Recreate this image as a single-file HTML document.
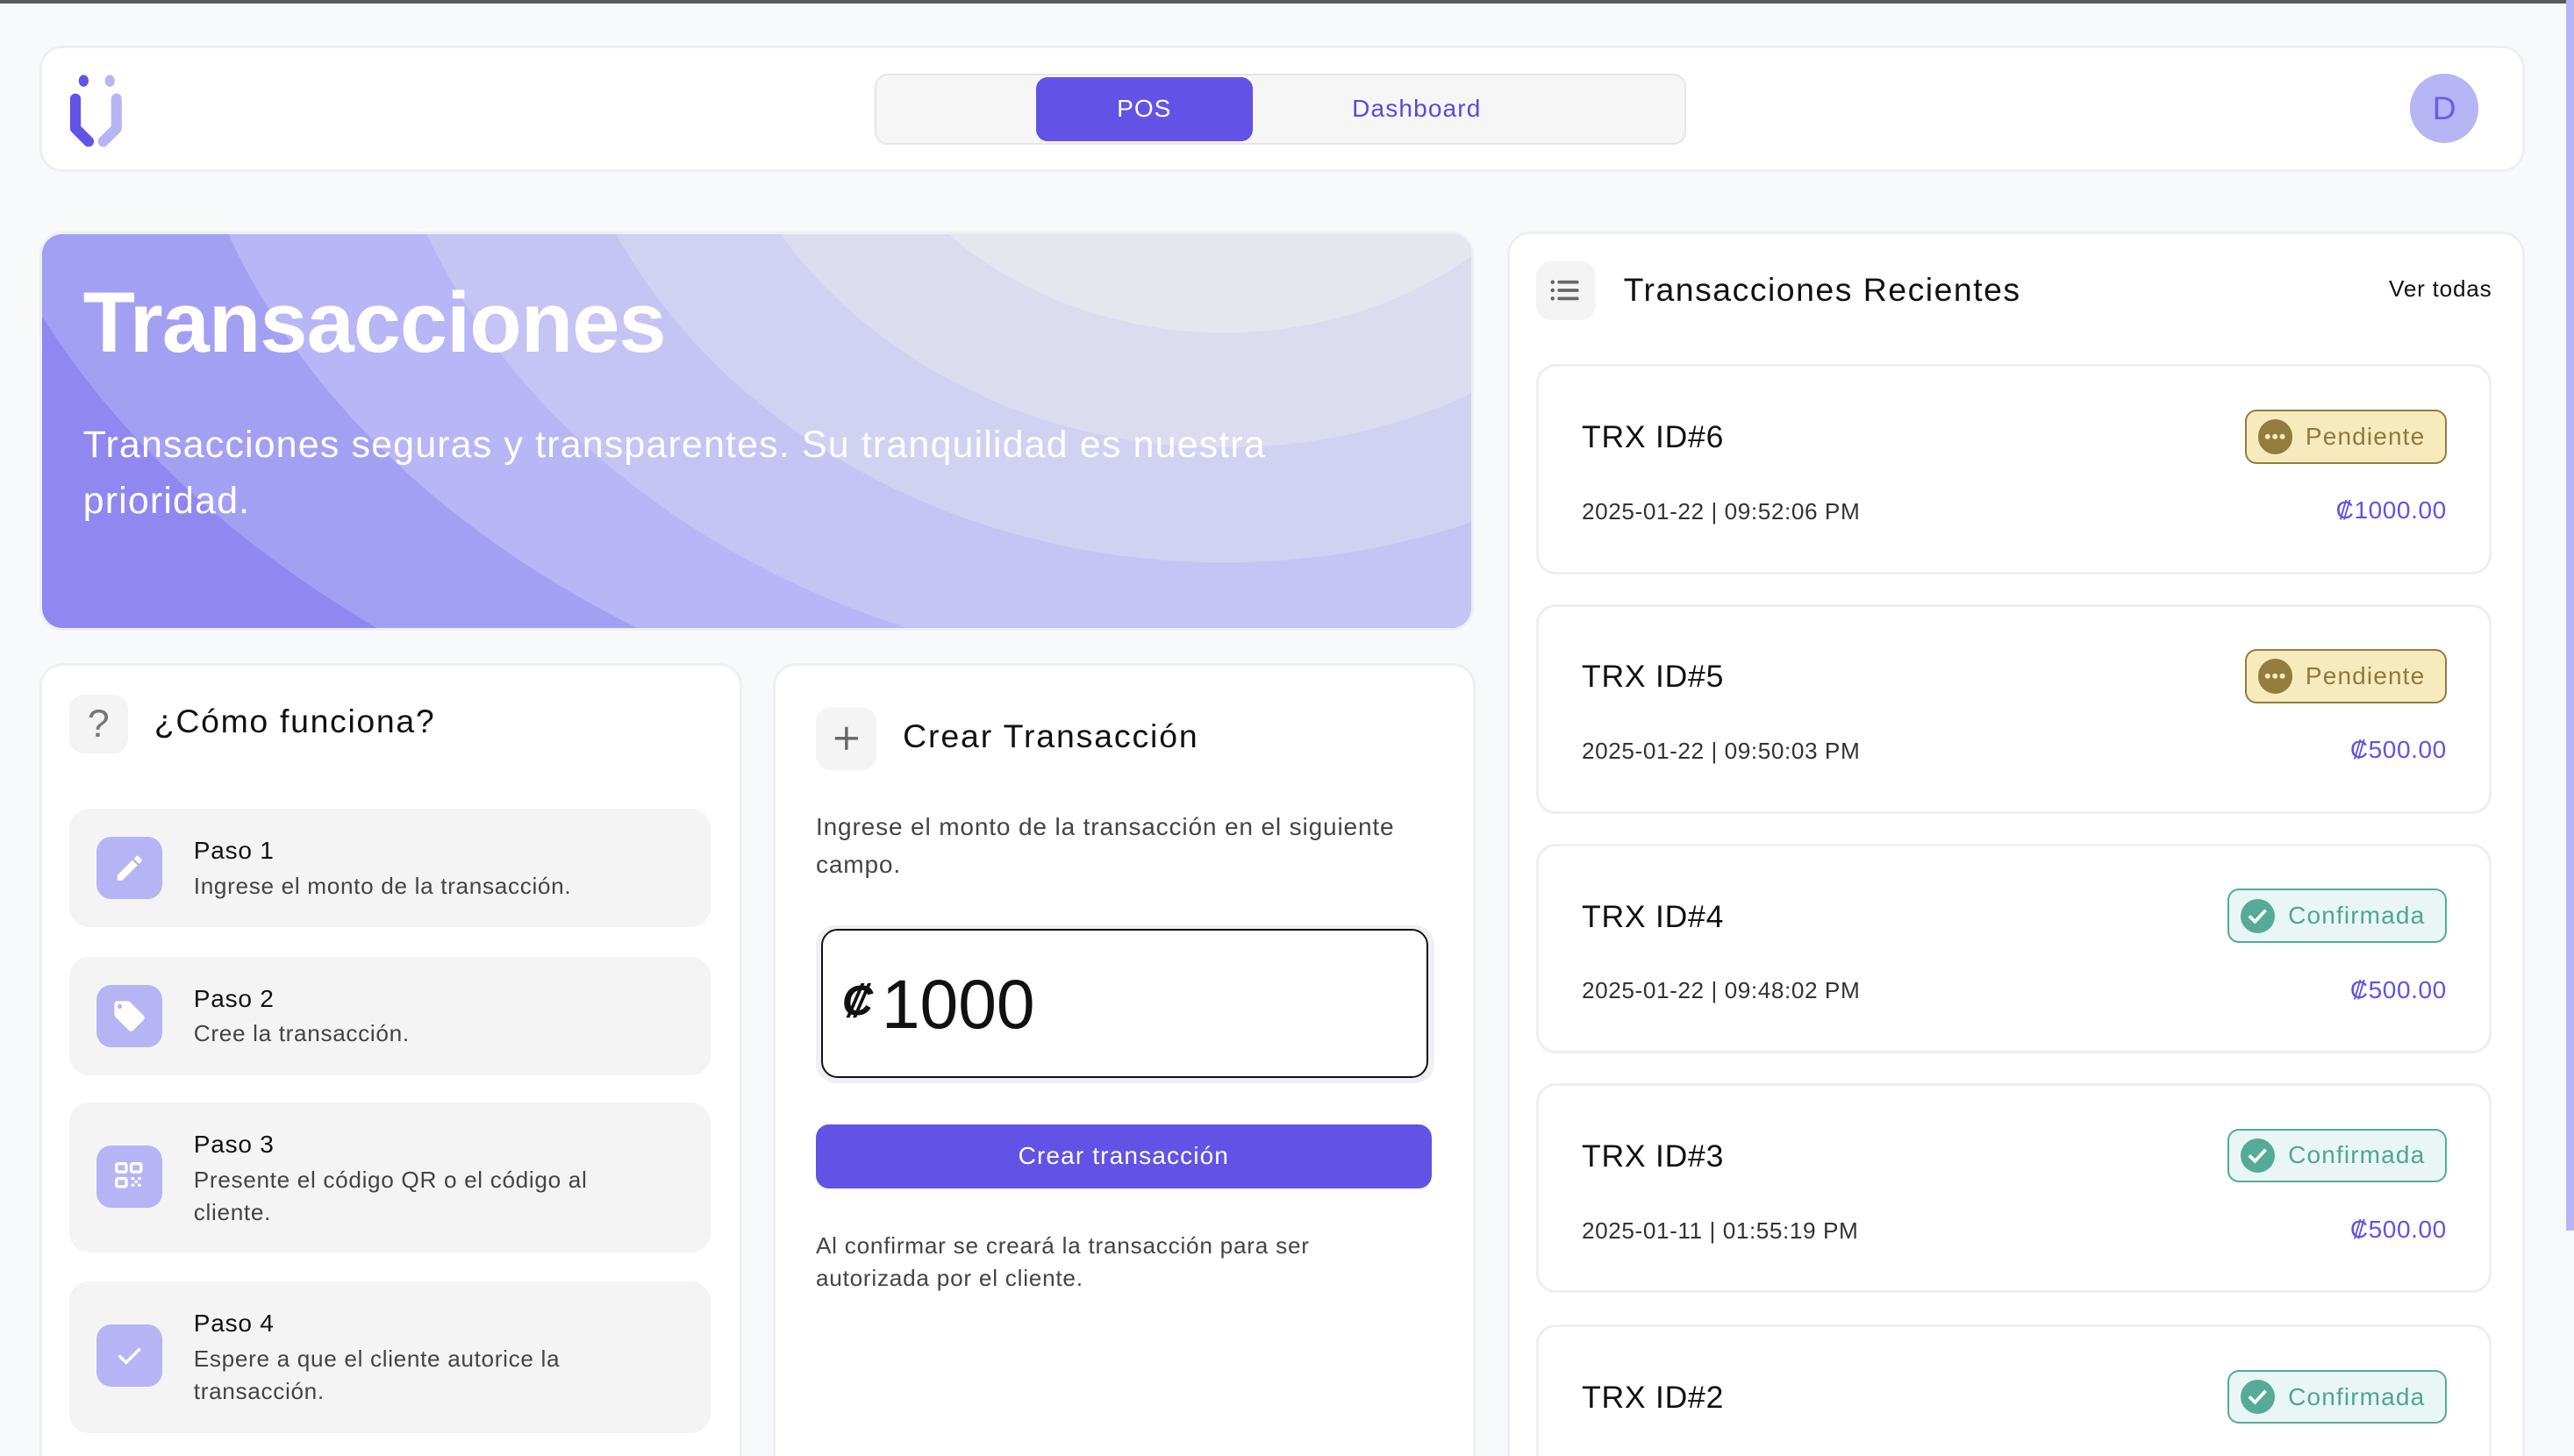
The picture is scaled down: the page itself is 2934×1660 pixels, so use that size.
<!DOCTYPE html>
<html><head><meta charset="utf-8"><style>
html,body{margin:0;padding:0;overflow:hidden}
body{width:1568px;height:887px;zoom:1.87117;background:#f8f9fb;font-family:"Liberation Sans",sans-serif;color:#111}
#w{position:relative;width:1568px;height:887px;overflow:hidden}
.a{position:absolute}
.card{position:absolute;background:#fff;border:2px solid #eeeff3;border-radius:14px;box-sizing:border-box}
.ib{position:absolute;width:36px;height:36px;background:#f4f4f5;border-radius:9px;display:flex;align-items:center;justify-content:center}
.step{position:absolute;left:42px;width:391px;background:#f4f4f5;border-radius:12px}
.sic{position:absolute;left:17px;width:40px;height:38px;background:#b7b4f6;border-radius:9px;display:flex;align-items:center;justify-content:center}
.st{position:absolute;left:76px;font-size:15px;color:#111;letter-spacing:0.4px}
.sd{position:absolute;left:76px;font-size:14px;color:#444;line-height:20px;width:265px;letter-spacing:0.35px}
.trx{position:absolute;left:936px;width:582px;height:128px;background:#fff;border:2px solid #eeeff3;border-radius:12px;box-sizing:border-box}
.trx .t{position:absolute;left:26px;top:32px;font-size:19px;color:#111;letter-spacing:0.4px}
.trx .d{position:absolute;left:26px;top:80px;font-size:14px;color:#333;letter-spacing:0.3px}
.trx .m{position:absolute;right:26px;top:79px;font-size:15px;color:#6352e6;letter-spacing:0.3px}
.bd{position:absolute;right:26px;top:26px;height:33px;border-radius:7px;box-sizing:border-box;display:flex;align-items:center;padding:0 12px 0 7px;font-size:15px;letter-spacing:0.6px}
.pe{background:#f7eabd;border:1.5px solid #927d3e;color:#8d7a3e}
.co{background:#e9f6f5;border:1.5px solid #55ab97;color:#4ea692}
.dot{width:21px;height:21px;border-radius:50%;margin-right:8px;display:flex;align-items:center;justify-content:center}
</style></head><body><div id="w">
<div class="a" style="left:0;top:0;width:1568px;height:2px;background:#5a5a5c"></div>
<div class="a" style="left:1563px;top:0;width:5px;height:750px;background:#b8b5f5"></div>

<div class="card" style="left:24px;top:28px;width:1514px;height:77px"></div>
<svg class="a" style="left:38px;top:42px" width="40" height="48" viewBox="0 0 40 48">
<ellipse cx="13" cy="7" rx="3" ry="3.6" fill="#6352e6"/><ellipse cx="29" cy="7" rx="3" ry="3.6" fill="#b8b5f5"/>
<path d="M33 18 L33 36 L25 44" stroke="#b8b5f5" stroke-width="6.5" stroke-linecap="round" stroke-linejoin="round" fill="none"/>
<path d="M8 18 L8 36 L16 44" stroke="#6352e6" stroke-width="6.5" stroke-linecap="round" stroke-linejoin="round" fill="none"/>
</svg>
<div class="a" style="left:533px;top:45px;width:494px;height:43px;background:#f6f6f7;border:1.5px solid #e6e6e9;border-radius:8px;box-sizing:border-box"></div>
<div class="a" style="left:631px;top:47px;width:132px;height:39px;background:#6352e6;border-radius:7px;color:#fff;font-size:15px;display:flex;align-items:center;justify-content:center;letter-spacing:0.5px">POS</div>
<div class="a" style="left:763px;top:47px;width:200px;height:39px;color:#5b48e0;font-size:15px;display:flex;align-items:center;justify-content:center;letter-spacing:0.6px">Dashboard</div>
<div class="a" style="left:1468px;top:45px;width:42px;height:42px;border-radius:50%;background:#b8b5f5;color:#6b5ee8;font-size:20px;display:flex;align-items:center;justify-content:center">D</div>

<div class="a" style="left:24px;top:141px;width:874px;height:243px;border-radius:14px;overflow:hidden;border:2px solid #eeeff3;box-sizing:border-box">
<svg width="874" height="243" viewBox="0 0 874 243" style="position:absolute;left:0;top:0">
<rect width="874" height="243" fill="#9088f0"/>
<ellipse cx="720" cy="-150" rx="780" ry="520" fill="#a3a0f4"/>
<ellipse cx="720" cy="-150" rx="640" ry="470" fill="#b8b6f6"/>
<ellipse cx="720" cy="-150" rx="520" ry="420" fill="#c5c4f4"/>
<ellipse cx="720" cy="-150" rx="410" ry="350" fill="#d1d1f2"/>
<ellipse cx="720" cy="-150" rx="320" ry="280" fill="#dcdcf0"/>
<ellipse cx="720" cy="-150" rx="240" ry="210" fill="#e6e6ef"/>
<ellipse cx="720" cy="-150" rx="170" ry="150" fill="#efefef"/>
</svg>
<div class="a" style="left:25px;top:24px;font-size:52px;font-weight:bold;color:#fff;letter-spacing:-0.5px">Transacciones</div>
<div class="a" style="left:25px;top:112px;width:780px;font-size:23px;line-height:34px;color:#fff;letter-spacing:0.6px">Transacciones seguras y transparentes. Su tranquilidad es nuestra prioridad.</div>
</div>

<div class="card" style="left:24px;top:404px;width:428px;height:500px"></div>
<div class="ib" style="left:42px;top:423px;font-size:24px;color:#777">?</div>
<div class="a" style="left:94px;top:428px;font-size:20px;letter-spacing:0.9px">¿Cómo funciona?</div>
<div class="step" style="top:493px;height:72px"><div class="sic" style="top:17px"><svg width="20" height="20" viewBox="0 0 24 24"><path d="M3 17.25V21h3.75L17.8 9.94l-3.75-3.75L3 17.25zM20.7 7.04a1 1 0 000-1.41l-2.34-2.34a1 1 0 00-1.410 0l-1.83 1.83 3.75 3.75 1.83-1.83z" fill="#fff"/></svg></div><div class="st" style="top:17px">Paso 1</div><div class="sd" style="top:37px;width:300px">Ingrese el monto de la transacción.</div></div>
<div class="step" style="top:583px;height:72px"><div class="sic" style="top:17px"><svg width="22" height="22" viewBox="0 0 24 24"><path d="M21.4 11.6l-9-9C12.05 2.25 11.55 2 11 2H4c-1.1 0-2 .9-2 2v7c0 .55.22 1.05.59 1.42l9 9c.36.36.86.58 1.41.58s1.05-.22 1.41-.59l7-7c.37-.36.59-.86.59-1.41s-.23-1.06-.6-1.4zM5.5 7C4.67 7 4 6.330 4 5.5S4.67 4 5.5 4 7 4.67 7 5.5 6.33 7 5.5 7z" fill="#fff"/></svg></div><div class="st" style="top:17px">Paso 2</div><div class="sd" style="top:37px">Cree la transacción.</div></div>
<div class="step" style="top:672px;height:91px"><div class="sic" style="top:26px"><svg width="20" height="20" viewBox="0 0 20 20" fill="none" stroke="#fff" stroke-width="1.8"><rect x="2" y="2" width="6" height="5" rx="1"/><rect x="11" y="2" width="6" height="5" rx="1"/><rect x="2" y="11" width="6" height="5" rx="1"/><path d="M11 11h2M15 11h2M13 13h2M11 15h2M15 15h2" stroke-width="1.5"/></svg></div><div class="st" style="top:17px">Paso 3</div><div class="sd" style="top:37px">Presente el código QR o el código al cliente.</div></div>
<div class="step" style="top:781px;height:92px"><div class="sic" style="top:26px"><svg width="20" height="20" viewBox="0 0 24 24"><path d="M5 12.5l4.5 4.5L19 7.5" stroke="#fff" stroke-width="2.2" fill="none" stroke-linecap="round"/></svg></div><div class="st" style="top:17px">Paso 4</div><div class="sd" style="top:37px">Espere a que el cliente autorice la transacción.</div></div>

<div class="card" style="left:471px;top:404px;width:428px;height:500px"></div>
<div class="ib" style="left:497px;top:431px;width:37px;height:38px"><svg width="18" height="18" viewBox="0 0 18 18"><path d="M9 2v14M2 9h14" stroke="#666" stroke-width="1.8"/></svg></div>
<div class="a" style="left:550px;top:437px;font-size:20px;letter-spacing:1px">Crear Transacción</div>
<div class="a" style="left:497px;top:492px;width:378px;font-size:15px;line-height:23px;color:#444;letter-spacing:0.45px">Ingrese el monto de la transacción en el siguiente campo.</div>
<div class="a" style="left:497px;top:564px;width:377px;height:96px;background:#f0f0f4;border-radius:12px"></div>
<div class="a" style="left:500px;top:566px;width:370px;height:91px;background:#fff;border:1.5px solid #111;border-radius:10px;box-sizing:border-box"></div>
<div class="a" style="left:513px;top:595px;font-size:26px;font-weight:bold;font-style:italic">₡</div>
<div class="a" style="left:537px;top:588px;font-size:42px">1000</div>
<div class="a" style="left:497px;top:685px;width:375px;height:39px;background:#6352e6;border-radius:8px;color:#fff;font-size:15px;display:flex;align-items:center;justify-content:center;letter-spacing:0.6px">Crear transacción</div>
<div class="a" style="left:497px;top:749px;width:330px;font-size:14px;line-height:20px;color:#444;letter-spacing:0.4px">Al confirmar se creará la transacción para ser autorizada por el cliente.</div>

<div class="card" style="left:918px;top:141px;width:620px;height:770px"></div>
<div class="ib" style="left:936px;top:159px;width:36px;height:36px"><svg width="20" height="16" viewBox="0 0 20 16"><g fill="#666"><circle cx="2" cy="3" r="1.2"/><circle cx="2" cy="8" r="1.2"/><circle cx="2" cy="13" r="1.2"/><rect x="5" y="2" width="13" height="2" rx="1"/><rect x="5" y="7" width="13" height="2" rx="1"/><rect x="5" y="12" width="13" height="2" rx="1"/></g></svg></div>
<div class="a" style="left:989px;top:165px;font-size:20px;letter-spacing:0.8px">Transacciones Recientes</div>
<div class="a" style="right:50px;top:168px;font-size:14px;letter-spacing:0.4px">Ver todas</div>

<div class="trx" style="top:222px"><div class="t">TRX ID#6</div><div class="bd pe"><div class="dot" style="background:#927d3e"><svg width="13" height="4"><g fill="#f7eabd"><circle cx="2" cy="2" r="1.6"/><circle cx="6.5" cy="2" r="1.6"/><circle cx="11" cy="2" r="1.6"/></g></svg></div>Pendiente</div><div class="d">2025-01-22 | 09:52:06 PM</div><div class="m">₡1000.00</div></div>
<div class="trx" style="top:368px"><div class="t">TRX ID#5</div><div class="bd pe"><div class="dot" style="background:#927d3e"><svg width="13" height="4"><g fill="#f7eabd"><circle cx="2" cy="2" r="1.6"/><circle cx="6.5" cy="2" r="1.6"/><circle cx="11" cy="2" r="1.6"/></g></svg></div>Pendiente</div><div class="d">2025-01-22 | 09:50:03 PM</div><div class="m">₡500.00</div></div>
<div class="trx" style="top:514px"><div class="t">TRX ID#4</div><div class="bd co"><div class="dot" style="background:#55ab97"><svg width="13" height="11" viewBox="0 0 13 11"><path d="M1.5 5.5l3.5 3.5 6.5-7" stroke="#fff" stroke-width="2" fill="none"/></svg></div>Confirmada</div><div class="d">2025-01-22 | 09:48:02 PM</div><div class="m">₡500.00</div></div>
<div class="trx" style="top:660px"><div class="t">TRX ID#3</div><div class="bd co"><div class="dot" style="background:#55ab97"><svg width="13" height="11" viewBox="0 0 13 11"><path d="M1.5 5.5l3.5 3.5 6.5-7" stroke="#fff" stroke-width="2" fill="none"/></svg></div>Confirmada</div><div class="d">2025-01-11 | 01:55:19 PM</div><div class="m">₡500.00</div></div>
<div class="trx" style="top:807px"><div class="t">TRX ID#2</div><div class="bd co"><div class="dot" style="background:#55ab97"><svg width="13" height="11" viewBox="0 0 13 11"><path d="M1.5 5.5l3.5 3.5 6.5-7" stroke="#fff" stroke-width="2" fill="none"/></svg></div>Confirmada</div><div class="d">2025-01-10</div><div class="m">₡500.00</div></div>
</div></body></html>
